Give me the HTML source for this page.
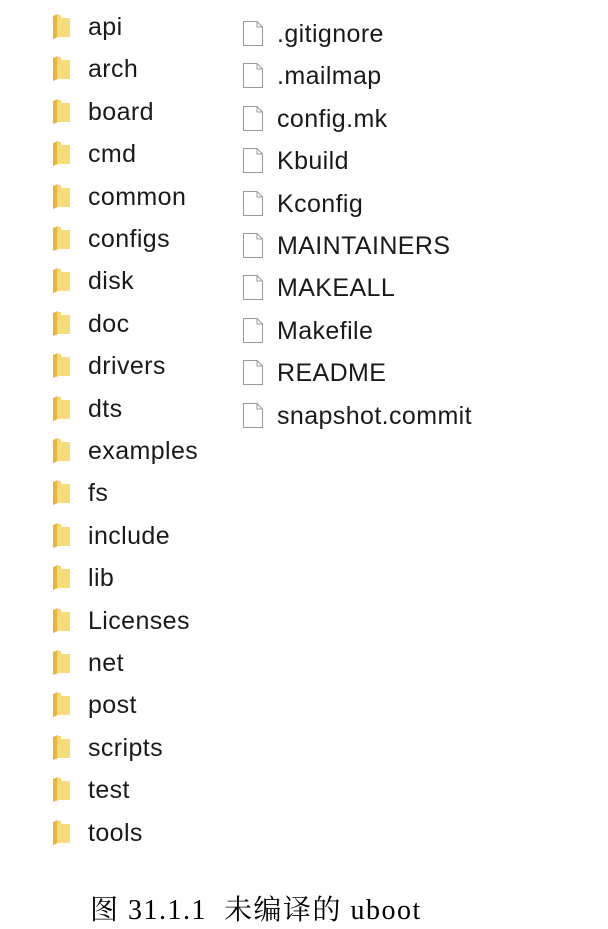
<!DOCTYPE html><html><head><style>
body{margin:0;width:608px;height:929px;background:#fff;position:relative;font-family:"Liberation Sans","Noto Sans CJK SC",sans-serif;}
.r{position:absolute;height:30px;font-size:25px;letter-spacing:0.4px;color:#1a1a1a;line-height:30px;}
.r span{position:absolute;left:36px;white-space:nowrap}
.f{position:absolute;left:0;top:1px;width:19px;height:27px}
.cap{position:absolute;left:90px;top:888px;font-family:"Liberation Serif","Noto Serif CJK SC",serif;font-size:28px;letter-spacing:1.5px;color:#000;white-space:nowrap}
</style></head><body>
<div id="c"></div>
<div class="cap">图 31.1.1&nbsp; 未编译的 uboot</div>
<script>
var d=["api","arch","board","cmd","common","configs","disk","doc","drivers","dts","examples","fs","include","lib","Licenses","net","post","scripts","test","tools"];
var f=[".gitignore",".mailmap","config.mk","Kbuild","Kconfig","MAINTAINERS","MAKEALL","Makefile","README","snapshot.commit"];
var h="";
var fold='<svg class="f" viewBox="0 0 19 27"><path d="M1 3 L6 1 L6 24 L1 26 Z" fill="#e8b43c"/><path d="M5 2 H9 V5 H18 V24 H5 Z" fill="#f7d66e"/><path d="M6 5 H18 V24 H6 Z" fill="#f9dc7a"/></svg>';
var file='<svg class="f" style="left:0;width:24px" viewBox="0 0 24 27"><path d="M2.5 1.5 H16 L21.5 7 V25.5 H2.5 Z" fill="#fff" stroke="#9a9a9a"/><path d="M16 1.5 V7 H21.5" fill="none" stroke="#9a9a9a"/></svg>';
d.forEach(function(n,i){h+='<div class="r" style="left:52px;top:'+(12+i*42.4)+'px">'+fold+'<span>'+n+'</span></div>';});
f.forEach(function(n,i){h+='<div class="r" style="left:241px;top:'+(19+i*42.4)+'px">'+file+'<span>'+n+'</span></div>';});
document.getElementById("c").innerHTML=h;
</script>
</body></html>
